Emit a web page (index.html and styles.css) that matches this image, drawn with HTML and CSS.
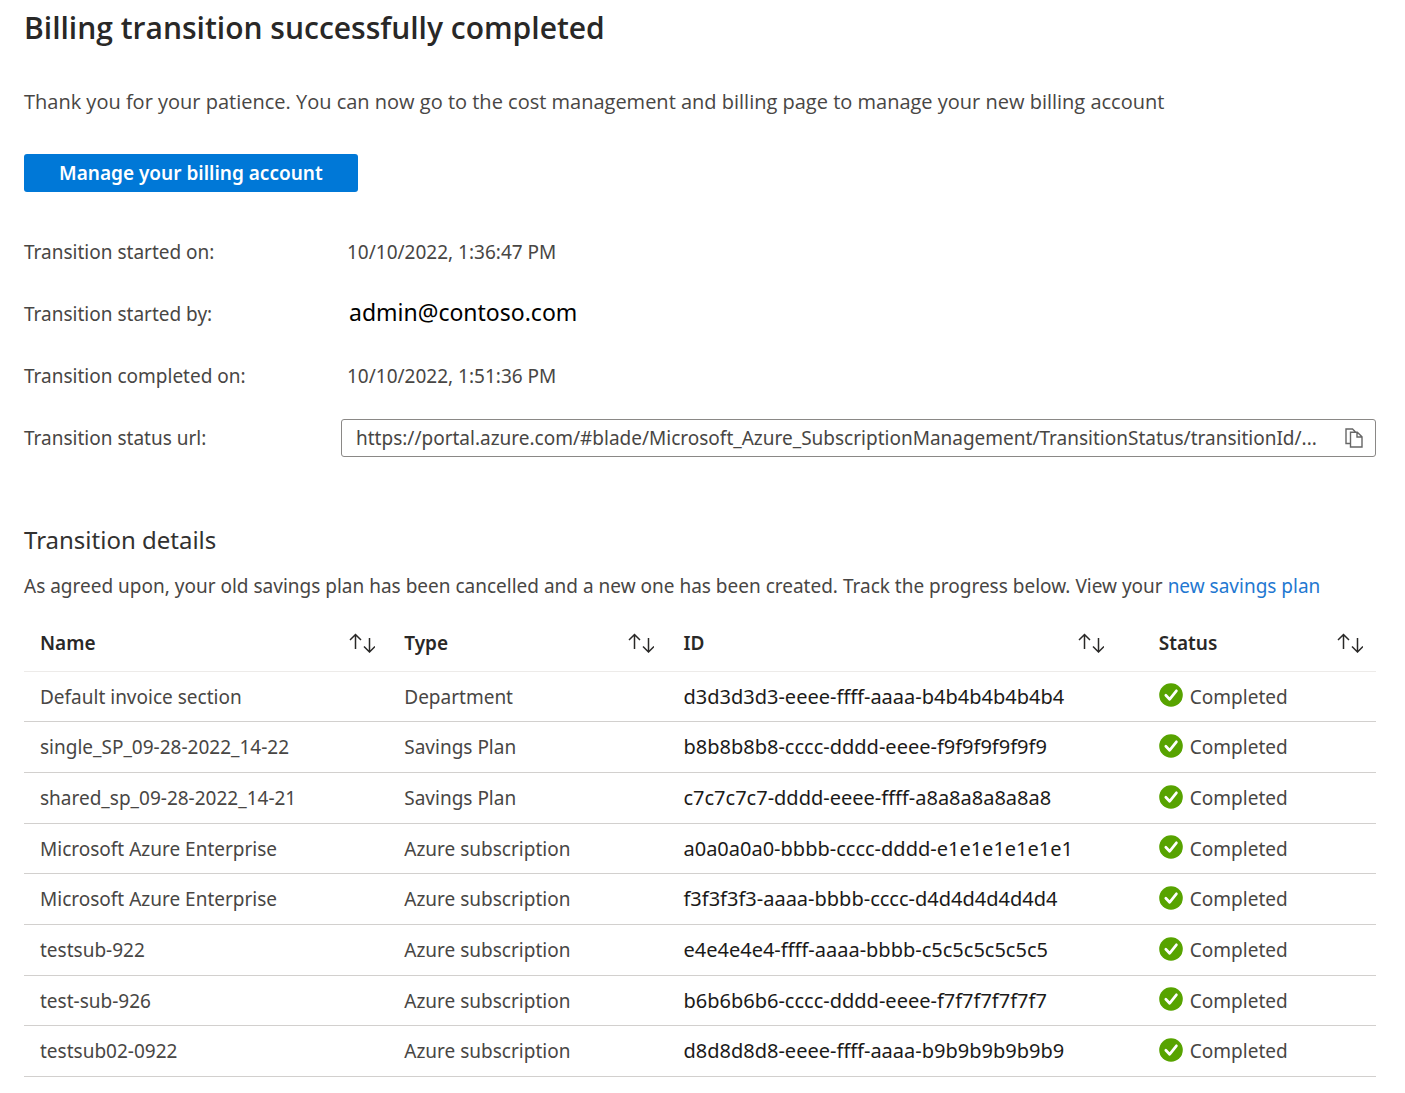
FILE: index.html
```html
<!DOCTYPE html>
<html lang="en">
<head>
<meta charset="utf-8">
<meta name="viewport" content="width=device-width, initial-scale=1">
<title>Billing transition successfully completed</title>
<link rel="stylesheet" href="styles.css">
</head>
<body>
<svg class="sprite" aria-hidden="true">
  <symbol id="sort" viewBox="0 0 26 20"><path d="M6.500 16V1.500M1 7l5.500-5.500L12 7M20.500 5v14M15 13.500l5.500 5.500 5.500-5.500" fill="none" stroke="currentColor" stroke-width="1.500"/></symbol>
  <symbol id="done" viewBox="0 0 24 24"><circle cx="12" cy="12" r="11.800" fill="#57a300"/><path d="M6.800 12.300l3.800 4 6.800-8.500" fill="none" stroke="#fff" stroke-width="2.700" stroke-linecap="round" stroke-linejoin="round"/></symbol>
</svg>
<main class="page">
  <h1 class="title">Billing transition successfully completed</h1>
  <p class="intro">Thank you for your patience. You can now go to the cost management and billing page to manage your new billing account</p>
  <button class="primary" type="button">Manage your billing account</button>

  <dl class="summary">
    <dt>Transition started on:</dt><dd>10/10/2022, 1:36:47 PM</dd>
    <dt>Transition started by:</dt><dd class="email">admin@contoso.com</dd>
    <dt>Transition completed on:</dt><dd>10/10/2022, 1:51:36 PM</dd>
    <dt><label for="status-url">Transition status url:</label></dt>
    <dd class="url">
      <input id="status-url" type="text" readonly value="https://portal.azure.com/#blade/Microsoft_Azure_SubscriptionManagement/TransitionStatus/transitionId/...">
      <button class="copy" type="button" aria-label="Copy">
        <svg width="18" height="20" viewBox="0 0 18 20" fill="none" stroke="#666" stroke-width="1.400"><path d="M5 15.500H1V1h6.500l3 3M5.500 4.200h6.800l4.700 4.600V19H5.500zM12 4.500V9h5"/></svg>
      </button>
    </dd>
  </dl>

  <h2 class="subtitle">Transition details</h2>
  <p class="note">As agreed upon, your old savings plan has been cancelled and a new one has been created. Track the progress below. View your <a href="#">new savings plan</a></p>

  <table class="details">
    <colgroup><col class="c-name"><col class="c-type"><col class="c-id"><col class="c-status"></colgroup>
    <thead>
      <tr>
        <th scope="col"><button type="button">Name<svg width="26" height="20"><use href="#sort"/></svg></button></th>
        <th scope="col"><button type="button">Type<svg width="26" height="20"><use href="#sort"/></svg></button></th>
        <th scope="col" class="id"><button type="button">ID<svg width="26" height="20"><use href="#sort"/></svg></button></th>
        <th scope="col"><button type="button">Status<svg width="26" height="20"><use href="#sort"/></svg></button></th>
      </tr>
    </thead>
    <tbody>
      <tr><td>Default invoice section</td><td>Department</td><td class="id">d3d3d3d3-eeee-ffff-aaaa-b4b4b4b4b4b4</td><td><span class="status"><svg width="24" height="24"><use href="#done"/></svg>Completed</span></td></tr>
      <tr><td>single_SP_09-28-2022_14-22</td><td>Savings Plan</td><td class="id">b8b8b8b8-cccc-dddd-eeee-f9f9f9f9f9f9</td><td><span class="status"><svg width="24" height="24"><use href="#done"/></svg>Completed</span></td></tr>
      <tr><td>shared_sp_09-28-2022_14-21</td><td>Savings Plan</td><td class="id">c7c7c7c7-dddd-eeee-ffff-a8a8a8a8a8a8</td><td><span class="status"><svg width="24" height="24"><use href="#done"/></svg>Completed</span></td></tr>
      <tr><td>Microsoft Azure Enterprise</td><td>Azure subscription</td><td class="id">a0a0a0a0-bbbb-cccc-dddd-e1e1e1e1e1e1</td><td><span class="status"><svg width="24" height="24"><use href="#done"/></svg>Completed</span></td></tr>
      <tr><td>Microsoft Azure Enterprise</td><td>Azure subscription</td><td class="id">f3f3f3f3-aaaa-bbbb-cccc-d4d4d4d4d4d4</td><td><span class="status"><svg width="24" height="24"><use href="#done"/></svg>Completed</span></td></tr>
      <tr><td>testsub-922</td><td>Azure subscription</td><td class="id">e4e4e4e4-ffff-aaaa-bbbb-c5c5c5c5c5c5</td><td><span class="status"><svg width="24" height="24"><use href="#done"/></svg>Completed</span></td></tr>
      <tr><td>test-sub-926</td><td>Azure subscription</td><td class="id">b6b6b6b6-cccc-dddd-eeee-f7f7f7f7f7f7</td><td><span class="status"><svg width="24" height="24"><use href="#done"/></svg>Completed</span></td></tr>
      <tr><td>testsub02-0922</td><td>Azure subscription</td><td class="id">d8d8d8d8-eeee-ffff-aaaa-b9b9b9b9b9b9</td><td><span class="status"><svg width="24" height="24"><use href="#done"/></svg>Completed</span></td></tr>
    </tbody>
  </table>
</main>
</body>
</html>
```
FILE: styles.css
```css
* { box-sizing: border-box; }
body {
  margin: 0;
  background: #fff;
  color: #484644;
  font: 19px/28px "Noto Sans", "Open Sans", sans-serif;
}
button, input { font: inherit; color: inherit; }
a { color: #1f78d1; text-decoration: none; }
.sprite { display: none; }
.page { padding: 8px 29px 16px 24px; }

.title { margin: 0 0 40px; font-family: "Open Sans", sans-serif; font-size: 30px; line-height: 40px; font-weight: 600; color: #292827; }
.intro { margin: 0 0 38px; font-family: "Open Sans", sans-serif; font-size: 20px; }
.primary {
  display: block;
  height: 38px;
  padding: 0 35px;
  border: 0;
  border-radius: 3px;
  background: #0078d7;
  color: #fff;
  font-weight: 600;
}

.summary {
  display: grid;
  grid-template-columns: 317px 1fr;
  grid-auto-rows: 38px;
  row-gap: 24px;
  align-items: center;
  margin: 41px 0 65px;
}
.summary dd { margin: 0; padding-left: 6px; }
.summary .email { padding: 0 0 4px 8px; color: #000; font-size: 23px; }
.summary .url {
  display: flex;
  align-items: center;
  height: 38px;
  padding: 0 12px 0 14px;
  border: 1px solid #8a8886;
  border-radius: 3px;
}
.url input { flex: 1; min-width: 0; padding: 0; border: 0; outline: 0; background: none; text-overflow: ellipsis; }
.copy { display: flex; padding: 0; border: 0; background: none; }

.subtitle { margin: 0 0 14px; font-size: 24px; line-height: 36px; font-weight: 400; color: #323130; }
.note { margin: 0 0 15px; }

.details { width: 100%; table-layout: fixed; border-collapse: separate; border-spacing: 0; }
.c-name { width: 364px; }
.c-type { width: 279px; }
.c-id { width: 475px; }
.c-status { width: 233px; }
.details th { height: 57px; padding: 0 13px 0 16px; border-bottom: 1px solid #edebe9; text-align: left; }
.details th.id { padding-right: 39px; }
.details th button {
  display: flex;
  align-items: center;
  justify-content: space-between;
  width: 100%;
  padding: 0;
  border: 0;
  background: none;
  color: #292827;
  font-weight: 600;
}
.details td { height: 51px; padding: 0 0 0 16px; border-bottom: 1px solid #d2d0ce; white-space: nowrap; }
.details tr:nth-child(3n+1) td { height: 50px; }
.details td.id { color: #1b1a19; font-size: 20px; }
.status { display: flex; align-items: center; gap: 7px; }
.status svg { margin-bottom: 3px; }
```
